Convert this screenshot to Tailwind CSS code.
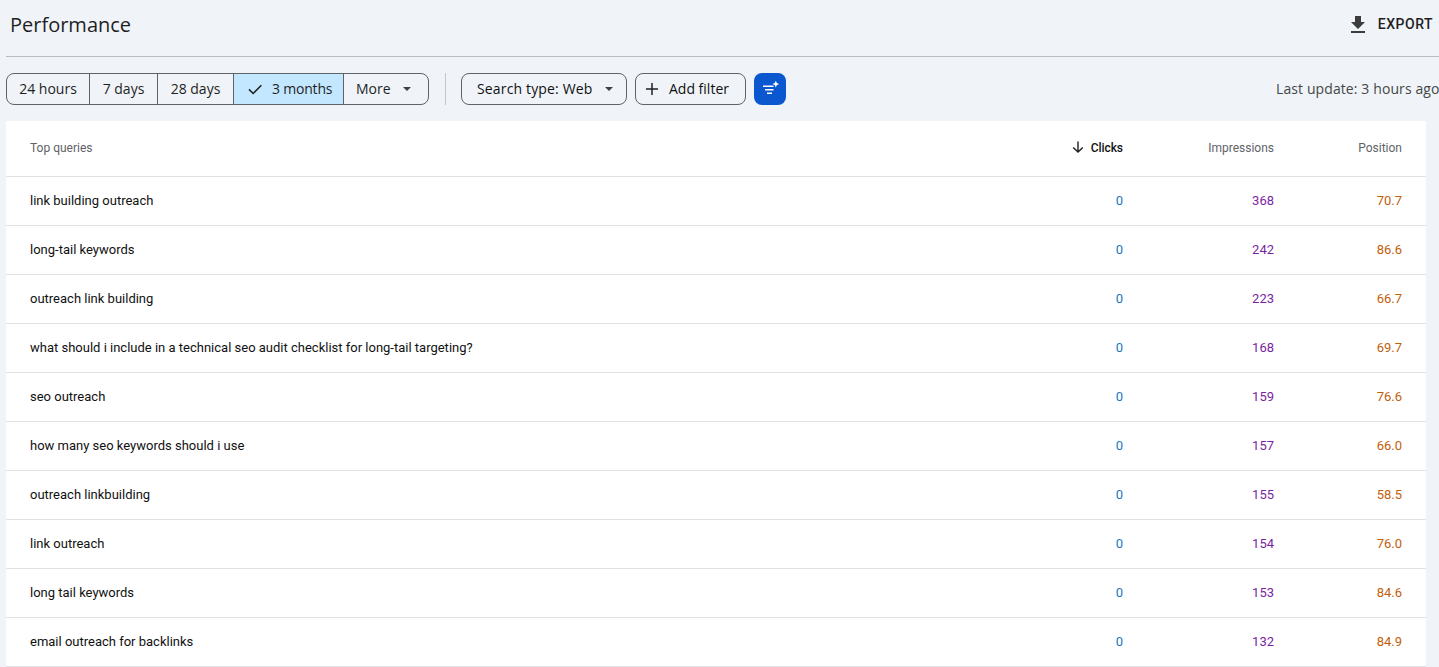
<!DOCTYPE html>
<html lang="en">
<head>
    <meta charset="UTF-8">
    <title>Performance</title>
    <script src="https://cdn.jsdelivr.net/npm/@tailwindcss/browser@4"></script>
</head>
<body class="bg-[#f0f4f9] text-[#111111] font-['Roboto',sans-serif] h-[667px] w-[1439px] overflow-hidden">
    <!-- header -->
    <header class="ml-[6px] h-[57px] border-b border-[#b9bdc2] flex items-center justify-between pl-[4px] pr-[6px]">
        <h1 class="text-[20px] font-['Open_Sans',sans-serif] text-[#1f1f1f] -mt-[6px]">Performance</h1>
        <button class="flex items-center gap-[8px] text-[14px] font-medium tracking-[0.5px] text-[#1f1f1f] -mt-[7px]">
            <svg class="w-[24px] h-[24px]" viewBox="0 0 24 24" fill="#3c3c3c"><path d="M19 9h-4V3H9v6H5l7 7 7-7zM5 18v2h14v-2H5z"/></svg>
            EXPORT
        </button>
    </header>

    <!-- filters -->
    <div class="flex items-center mt-[16px] pl-[6px] h-[32px] text-[14px] font-['Open_Sans',sans-serif] whitespace-nowrap">
        <div class="flex shrink-0 h-[32px] w-[423px] border border-[#5f6368] rounded-[8px] overflow-hidden text-[#1f1f1f]">
            <div class="w-[83px] border-r border-[#5f6368] flex items-center justify-center pb-[2px]">24 hours</div>
            <div class="w-[68px] border-r border-[#5f6368] flex items-center justify-center pb-[2px]">7 days</div>
            <div class="w-[76px] border-r border-[#5f6368] flex items-center justify-center pb-[2px]">28 days</div>
            <div class="w-[110px] border-r border-[#5f6368] bg-[#c2e7ff] flex items-center pl-[12px] gap-[8px]">
                <svg class="w-[18px] h-[18px]" viewBox="0 0 24 24" fill="none" stroke="#1f1f1f" stroke-width="2"><path d="M4 12.500l5.500 5.500L20.500 7"/></svg>
                <span class="tracking-[-0.2px] pb-[2px]">3 months</span>
            </div>
            <div class="flex-1 flex items-center pl-[12px] gap-[12px]">
                <span class="pb-[2px]">More</span>
                <span class="w-0 h-0 border-x-[4px] border-x-transparent border-t-[4px] border-t-[#3c4043]"></span>
            </div>
        </div>
        <div class="shrink-0 w-px h-[32px] bg-[#c4c7c5] ml-[16px] mr-[15px]"></div>
        <div class="shrink-0 w-[166px] h-[32px] border border-[#5f6368] rounded-[8px] flex items-center pl-[15px] gap-[13px] mr-[8px]">
            <span class="tracking-[0.15px] pb-[2px]">Search type: Web</span>
            <span class="w-0 h-0 border-x-[4px] border-x-transparent border-t-[4px] border-t-[#3c4043]"></span>
        </div>
        <div class="shrink-0 w-[111px] h-[32px] border border-[#5f6368] rounded-[8px] flex items-center pl-[8px] gap-[9px] mr-[8px]">
            <svg class="w-[16px] h-[16px]" viewBox="0 0 16 16" fill="none" stroke="#1f1f1f" stroke-width="1.500"><path d="M8 2v12M2 8h12"/></svg>
            <span class="pb-[2px]">Add filter</span>
        </div>
        <div class="shrink-0 w-[32px] h-[32px] rounded-[8px] bg-[#0b57d0] flex items-center justify-center">
            <svg class="w-[18px] h-[18px]" viewBox="0 0 18 18" fill="white"><path d="M2 5.600h10.500v1.500H2zM4 9.100h8.500v1.500H4zM6 12.600h5v1.500H6z"/><path d="M14.800 .8l1 2.300 2.300 1-2.300 1-1 2.300-1-2.300-2.300-1 2.300-1z"/></svg>
        </div>
        <div class="shrink-0 ml-[490px] pb-[2px] tracking-[0.1px] text-[#444746]">Last update: 3 hours ago</div>
    </div>

    <!-- table -->
    <div class="ml-[6px] mt-[16px] w-[1420px] bg-white text-[13px]">
        <div class="h-[56px] border-b border-[#dfe1e3] flex pl-[24px] pr-[24px] pt-[18px] text-[12px] text-[#5f6368]">
            <div class="flex-1">Top queries</div>
            <div class="w-[120px] flex justify-end items-start gap-[6px] text-[#111111] font-medium tracking-[-0.05px]">
                <svg class="w-[14px] h-[14px] mt-[1px]" viewBox="0 0 14 14" fill="none" stroke="#1f1f1f" stroke-width="1.400"><path d="M7 1.500v10.500M2.200 7.500L7 12l4.800-4.500"/></svg>
                Clicks
            </div>
            <div class="w-[151px] text-right">Impressions</div>
            <div class="w-[128px] text-right">Position</div>
        </div>

        <div class="h-[49px] border-b border-[#dfe1e3] flex items-center px-[24px]">
            <div class="flex-1">link building outreach</div>
            <div class="w-[120px] text-right text-[#1976c2]">0</div>
            <div class="w-[151px] text-right text-[#7b1fa2]">368</div>
            <div class="w-[128px] text-right text-[#c2600c]">70.7</div>
        </div>
        <div class="h-[49px] border-b border-[#dfe1e3] flex items-center px-[24px]">
            <div class="flex-1">long-tail keywords</div>
            <div class="w-[120px] text-right text-[#1976c2]">0</div>
            <div class="w-[151px] text-right text-[#7b1fa2]">242</div>
            <div class="w-[128px] text-right text-[#c2600c]">86.6</div>
        </div>
        <div class="h-[49px] border-b border-[#dfe1e3] flex items-center px-[24px]">
            <div class="flex-1">outreach link building</div>
            <div class="w-[120px] text-right text-[#1976c2]">0</div>
            <div class="w-[151px] text-right text-[#7b1fa2]">223</div>
            <div class="w-[128px] text-right text-[#c2600c]">66.7</div>
        </div>
        <div class="h-[49px] border-b border-[#dfe1e3] flex items-center px-[24px]">
            <div class="flex-1">what should i include in a technical seo audit checklist for long-tail targeting?</div>
            <div class="w-[120px] text-right text-[#1976c2]">0</div>
            <div class="w-[151px] text-right text-[#7b1fa2]">168</div>
            <div class="w-[128px] text-right text-[#c2600c]">69.7</div>
        </div>
        <div class="h-[49px] border-b border-[#dfe1e3] flex items-center px-[24px]">
            <div class="flex-1">seo outreach</div>
            <div class="w-[120px] text-right text-[#1976c2]">0</div>
            <div class="w-[151px] text-right text-[#7b1fa2]">159</div>
            <div class="w-[128px] text-right text-[#c2600c]">76.6</div>
        </div>
        <div class="h-[49px] border-b border-[#dfe1e3] flex items-center px-[24px]">
            <div class="flex-1">how many seo keywords should i use</div>
            <div class="w-[120px] text-right text-[#1976c2]">0</div>
            <div class="w-[151px] text-right text-[#7b1fa2]">157</div>
            <div class="w-[128px] text-right text-[#c2600c]">66.0</div>
        </div>
        <div class="h-[49px] border-b border-[#dfe1e3] flex items-center px-[24px]">
            <div class="flex-1">outreach linkbuilding</div>
            <div class="w-[120px] text-right text-[#1976c2]">0</div>
            <div class="w-[151px] text-right text-[#7b1fa2]">155</div>
            <div class="w-[128px] text-right text-[#c2600c]">58.5</div>
        </div>
        <div class="h-[49px] border-b border-[#dfe1e3] flex items-center px-[24px]">
            <div class="flex-1">link outreach</div>
            <div class="w-[120px] text-right text-[#1976c2]">0</div>
            <div class="w-[151px] text-right text-[#7b1fa2]">154</div>
            <div class="w-[128px] text-right text-[#c2600c]">76.0</div>
        </div>
        <div class="h-[49px] border-b border-[#dfe1e3] flex items-center px-[24px]">
            <div class="flex-1">long tail keywords</div>
            <div class="w-[120px] text-right text-[#1976c2]">0</div>
            <div class="w-[151px] text-right text-[#7b1fa2]">153</div>
            <div class="w-[128px] text-right text-[#c2600c]">84.6</div>
        </div>
        <div class="h-[49px] border-b border-[#dfe1e3] flex items-center px-[24px]">
            <div class="flex-1">email outreach for backlinks</div>
            <div class="w-[120px] text-right text-[#1976c2]">0</div>
            <div class="w-[151px] text-right text-[#7b1fa2]">132</div>
            <div class="w-[128px] text-right text-[#c2600c]">84.9</div>
        </div>
    </div>
</body>
</html>
